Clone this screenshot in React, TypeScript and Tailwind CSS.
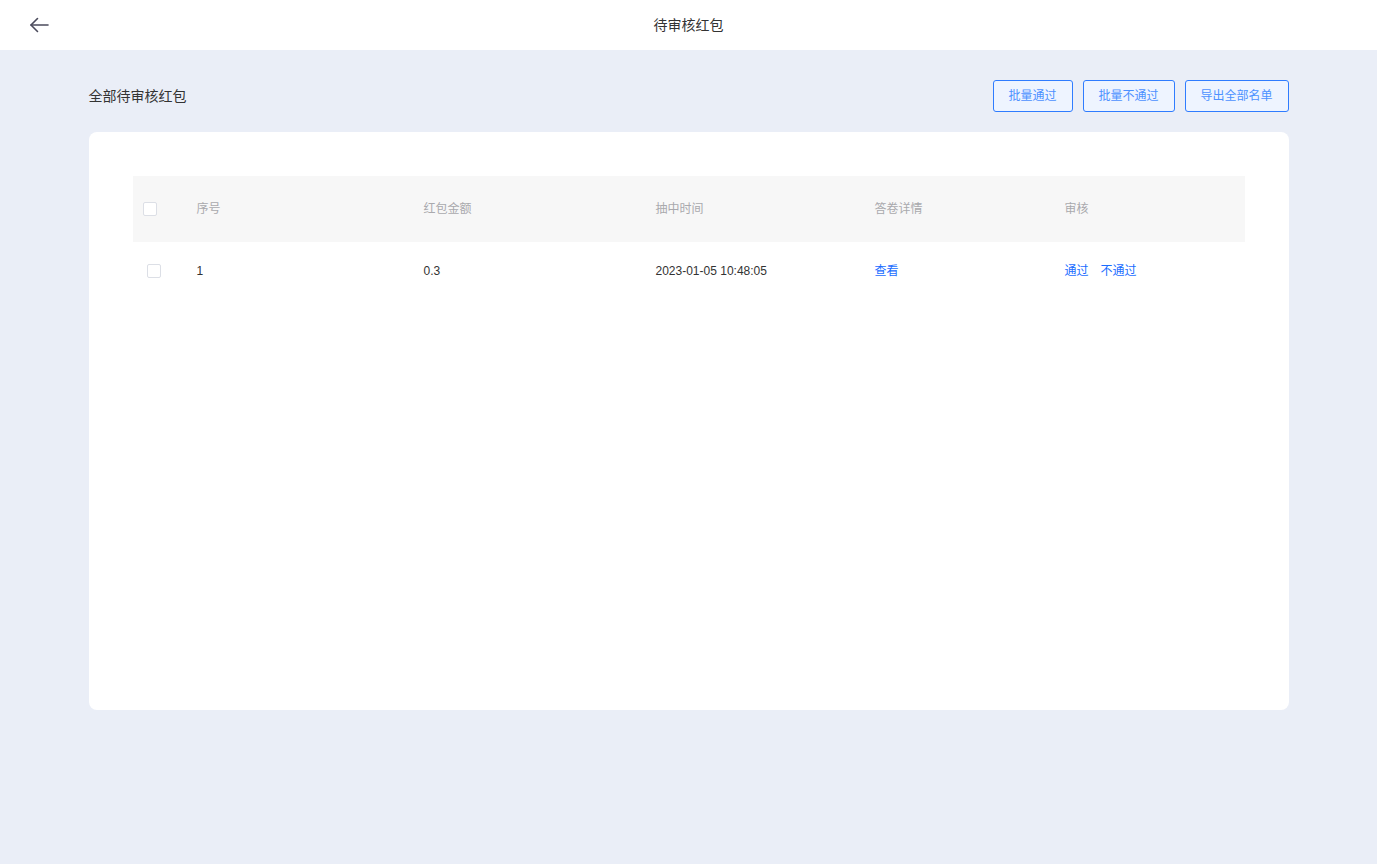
import React from 'react';

const font = { fontFamily: '"Liberation Sans", "Noto Sans CJK SC", sans-serif' };

interface Row {
  id: number;
  amount: string;
  time: string;
}

const rows: Row[] = [{ id: 1, amount: '0.3', time: '2023-01-05 10:48:05' }];

const actions = [
  { label: '批量通过', w: 'w-[80px]' },
  { label: '批量不通过', w: 'w-[92px]' },
  { label: '导出全部名单', w: 'w-[104px]' },
];

function Checkbox() {
  return <div className="w-[14px] h-[14px] rounded-[2px] border border-[#dcdfe6] bg-white" />;
}

export default function App() {
  return (
    <div className="w-full min-h-screen bg-[#eaeef7] flex flex-col" style={font}>
      <header className="h-[50px] bg-white flex items-center relative">
        <button className="absolute left-[29px] top-[15px] w-[20px] h-[20px] flex items-center justify-center text-[#4b4b5c]">
          <svg width="20" height="20" viewBox="0 0 20 20" fill="none" stroke="currentColor" strokeWidth="1.6" strokeLinecap="round" strokeLinejoin="round">
            <path d="M19 10H2" />
            <path d="M8.5 3.5L2 10l6.5 6.5" />
          </svg>
        </button>
        <h1 className="flex-1 text-center text-[14px] text-[#333]">待审核红包</h1>
      </header>

      <main className="w-[1200px] mx-auto pt-[30px]">
        <div className="flex items-center justify-between h-[32px]">
          <span className="text-[14px] text-[#333]">全部待审核红包</span>
          <div className="flex gap-[10px]">
            {actions.map((a) => (
              <button
                key={a.label}
                className={`${a.w} h-[32px] rounded-[3px] border border-[#2f7cff] bg-[#eef4ff] text-[12px] text-[#4c91ff]`}
              >
                {a.label}
              </button>
            ))}
          </div>
        </div>

        <div className="mt-[20px] h-[578px] bg-white rounded-[8px] p-[44px]">
          <div className="grid grid-cols-[64px_227px_232px_219px_190px_1fr] h-[66px] items-center bg-[#f7f7f7] text-[12px] text-[#a9a9ad]">
            <div className="pl-[10px]"><Checkbox /></div>
            <div>序号</div>
            <div>红包金额</div>
            <div>抽中时间</div>
            <div>答卷详情</div>
            <div>审核</div>
          </div>
          {rows.map((r) => (
            <div
              key={r.id}
              className="grid grid-cols-[64px_227px_232px_219px_190px_1fr] h-[58px] items-center text-[12px] text-[#333]"
            >
              <div className="pl-[14px]"><Checkbox /></div>
              <div>{r.id}</div>
              <div>{r.amount}</div>
              <div>{r.time}</div>
              <div className="text-[#1a6dff] cursor-pointer">查看</div>
              <div className="flex gap-[12px] text-[#1a6dff]">
                <span className="cursor-pointer">通过</span>
                <span className="cursor-pointer">不通过</span>
              </div>
            </div>
          ))}
        </div>
      </main>
    </div>
  );
}
